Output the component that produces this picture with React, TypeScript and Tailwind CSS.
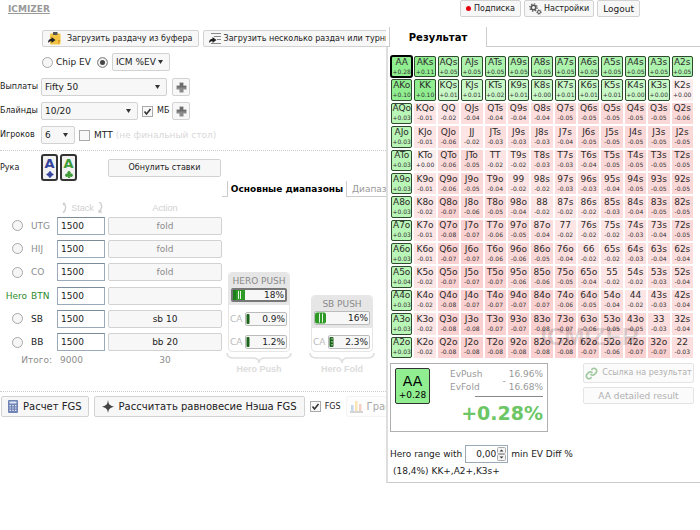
import type { InputHTMLAttributes, ReactNode } from "react";
import { clsx } from "clsx";

const RANKS = ["A", "K", "Q", "J", "T", "9", "8", "7", "6", "5", "4", "3", "2"];

// EV diff in hundredths of a percent, same order as the hand matrix
const EV: number[][] = [
  [28, 11, 5, 5, 5, 5, 5, 5, 5, 5, 5, 5, 5],
  [10, 10, 1, 1, 2, 1, 0, 1, 1, 1, 0, 0, 0],
  [3, -1, -2, -4, -4, -4, -4, -5, -5, -5, -5, -5, -6],
  [3, -1, -6, -2, -3, -3, -3, -4, -5, -5, -5, -5, -5],
  [3, 0, -6, -5, -2, -2, -3, -3, -4, -5, -5, -5, -5],
  [3, -1, -6, -5, -4, -2, -2, -3, -3, -4, -5, -5, -5],
  [3, -2, -7, -6, -5, -4, -2, -2, -2, -3, -4, -5, -5],
  [3, -1, -8, -7, -6, -5, -4, -2, -2, -2, -3, -4, -5],
  [3, -1, -7, -7, -6, -6, -5, -4, -2, -2, -3, -4, -4],
  [4, -2, -7, -7, -7, -6, -6, -5, -4, -2, -2, -3, -4],
  [3, -2, -8, -7, -7, -7, -7, -6, -5, -4, -2, -3, -4],
  [3, -2, -8, -8, -7, -7, -8, -7, -6, -5, -5, -3, -4],
  [3, -2, -8, -8, -8, -8, -8, -8, -7, -6, -7, -7, -3],
];

const SEATS = [
  { name: "UTG", action: "fold", tone: "text-[#8c8c8c]" },
  { name: "HIJ", action: "fold", tone: "text-[#8c8c8c]" },
  { name: "CO", action: "fold", tone: "text-[#8c8c8c]" },
  { name: "BTN", action: "", tone: "text-[#2c8a2c]", hero: true },
  { name: "SB", action: "sb 10", tone: "text-[#222]" },
  { name: "BB", action: "bb 20", tone: "text-[#222]" },
];

function handName(r: number, c: number) {
  if (r === c) return RANKS[r] + RANKS[c];
  return r < c ? `${RANKS[r]}${RANKS[c]}s` : `${RANKS[c]}${RANKS[r]}o`;
}

function inRange(r: number, c: number) {
  return r === 0 || c === 0 || (r === 1 && c < 12);
}

function cellColor(ev: number, selected: boolean) {
  if (selected) {
    if (ev >= 10) return "bg-[#90ee90]";
    if (ev >= 5) return "bg-[#adf2ad]";
    if (ev >= 3) return "bg-[#b9f5b6]";
    return "bg-[#c9f8c7]";
  }
  if (ev >= 0) return "bg-[#fdeeee]";
  if (ev >= -2) return "bg-[#fde5e5]";
  if (ev >= -4) return "bg-[#fcdede]";
  if (ev >= -6) return "bg-[#fbd8d8]";
  return "bg-[#fad0d0]";
}

function formatEv(ev: number) {
  return `${ev < 0 ? "-" : "+"}${(Math.abs(ev) / 100).toFixed(2)}`;
}

function Button({
  children,
  className,
  label,
  disabled,
}: {
  children?: ReactNode;
  className?: string;
  label?: string;
  disabled?: boolean;
}) {
  return (
    <button
      type="button"
      aria-label={label}
      disabled={disabled}
      className={clsx(
        "flex shrink-0 items-center justify-center whitespace-nowrap rounded-[2px] border",
        disabled ? "border-[#e4e4e4] bg-[#fbfbfb]" : "border-[#d2d2d2] bg-[#f7f7f7]",
        className
      )}
    >
      {children}
    </button>
  );
}

function Select({ label, value, className }: { label: string; value: string; className: string }) {
  return (
    <div className={clsx("relative shrink-0", className)}>
      <select
        aria-label={label}
        defaultValue={value}
        className="block h-[18px] w-full appearance-none rounded-[2px] border border-[#d2d2d2] bg-[#f7f7f7] pl-[3px] text-[9px]"
      >
        <option>{value}</option>
      </select>
      <svg className="pointer-events-none absolute right-[7px] top-[7px]" width="5" height="4" viewBox="0 0 5 4">
        <path d="M0 0h5L2.5 4z" fill="#333" />
      </svg>
    </div>
  );
}

function Radio(props: InputHTMLAttributes<HTMLInputElement>) {
  return (
    <input
      type="radio"
      {...props}
      className="block size-[11px] shrink-0 appearance-none rounded-full border border-[#a8a8a8] bg-[#f6f6f6] checked:border-[#999] checked:bg-[#444] checked:shadow-[inset_0_0_0_2px_#f4f4f4]"
    />
  );
}

function Check({ label, checked, className }: { label: string; checked?: boolean; className?: string }) {
  return (
    <label className={clsx("flex shrink-0 items-center gap-1", className)}>
      <span className="relative block size-[11px]">
        <input
          type="checkbox"
          defaultChecked={checked}
          className="peer block size-[11px] appearance-none border border-[#aaa] bg-[#f8f8f8]"
        />
        <svg className="pointer-events-none absolute inset-0 hidden peer-checked:block" width="11" height="11" viewBox="0 0 11 11">
          <path d="M2.5 5.5l2 2.5 4-5" fill="none" stroke="#333" strokeWidth="1.6" />
        </svg>
      </span>
      {label}
    </label>
  );
}

function PlusIcon() {
  return (
    <svg width="11" height="11" viewBox="0 0 11 11">
      <path d="M3.5.5h4v3h3v4h-3v3h-4v-3h-3v-4h3z" fill="#8a8a8a" />
      <path d="M4 1h3v3h3v1.5H1V4h3z" fill="#6c6c6c" />
    </svg>
  );
}

function ArrowMark() {
  return <path d="M0 11c0-3 1.500-4.200 3.500-4.200V5l4 3-4 3V9.200C2 9.200 1 9.700 0 11z" fill="#222" />;
}

function ClipboardIcon() {
  return (
    <svg width="13" height="13" viewBox="0 0 13 13">
      <rect x="2" y="1.500" width="10.500" height="11" rx="1" fill="#f3c444" />
      <path d="M5 0h4.500v3H5z" fill="#555" />
      <path d="M10 8h2.500l-2.500 4.500z" fill="#d99b1f" />
      <ArrowMark />
    </svg>
  );
}

function LinesIcon() {
  return (
    <svg width="13" height="13" viewBox="0 0 13 13">
      <path d="M2 1.500h10M5 4.500h7M8 7.500h4M2 11.500h10" stroke="#888" strokeWidth="1.200" />
      <ArrowMark />
    </svg>
  );
}

function GearsIcon() {
  return (
    <svg width="13" height="12" viewBox="0 0 13 12" fill="none" stroke="#555">
      <circle cx="4.500" cy="4.500" r="2.300" strokeWidth="1.600" />
      <circle cx="4.500" cy="4.500" r="3.700" strokeWidth="1.200" strokeDasharray="1.400 1.500" />
      <circle cx="10" cy="9" r="1.500" strokeWidth="1" />
      <circle cx="10" cy="9" r="2.400" strokeWidth=".8" strokeDasharray=".9 1" />
    </svg>
  );
}

function CalculatorIcon() {
  return (
    <svg width="10" height="13" viewBox="0 0 10 13">
      <rect width="10" height="13" rx="1" fill="#6f83b5" />
      <path d="M1.500 1.500h7v2h-7z" fill="#dfe5f4" />
      <path d="M1.500 5.700h7M1.500 8h7M1.500 10.300h7" stroke="#dfe5f4" strokeWidth="1.200" strokeDasharray="1.500 1.200" />
    </svg>
  );
}

function StarIcon() {
  return (
    <svg width="12" height="13" viewBox="0 0 12 13">
      <path d="M6 0l1 5 5 1.800-5 1.400-1 4.800-1-4.800L0 6.800 5 5z" fill="#444" />
      <path d="M6 3l2 2 2 1.800-2 1.700-2 2-2-2-2-1.700L4 5z" fill="#444" />
    </svg>
  );
}

function ChartIcon() {
  return (
    <svg width="13" height="13" viewBox="0 0 13 13">
      <path d="M1 5h2.500v6H1z" fill="#6c9bd8" />
      <path d="M5 1h2.500v10H5z" fill="#f0c040" />
      <path d="M9 4h2.500v7H9z" fill="#e58a6a" />
      <path d="M0 12h13" stroke="#777" strokeWidth="1.500" />
    </svg>
  );
}

function LinkIcon() {
  return (
    <svg className="opacity-50" width="13" height="13" viewBox="0 0 24 24" fill="none" stroke="#4a9a4a" strokeWidth="3">
      <path d="M10 13a5 5 0 0 0 7.500.5l3-3a5 5 0 0 0-7-7l-1.700 1.700" />
      <path d="M14 11a5 5 0 0 0-7.500-.5l-3 3a5 5 0 0 0 7 7l1.700-1.700" />
    </svg>
  );
}

function Card({ suit }: { suit: "diamond" | "club" }) {
  const diamond = suit === "diamond";
  return (
    <div
      className={clsx(
        "flex h-[27px] w-[17px] flex-col items-center rounded-[3px] border-2 border-[#333] bg-[#f1f1f1]",
        diamond ? "text-[#34449c]" : "text-[#3f9b37]"
      )}
    >
      <span className="text-[13px] font-bold leading-[15px]">A</span>
      <svg width="8" height="7" viewBox="0 0 8 7" fill="currentColor">
        {diamond ? (
          <path d="M4 0c.8 1.500 2 2.700 3.600 3.500C6 4.300 4.800 5.500 4 7 3.200 5.500 2 4.300.4 3.500 2 2.700 3.200 1.500 4 0z" stroke="currentColor" strokeWidth=".5" />
        ) : (
          <path d="M4 0a1.700 1.700 0 0 1 1.400 2.700A1.700 1.700 0 1 1 4.700 5L5.200 7H2.800l.5-2A1.700 1.700 0 1 1 2.600 2.700 1.700 1.700 0 0 1 4 0z" />
        )}
      </svg>
    </div>
  );
}

function RangeBar({ value, kind, active }: { value: string; kind: "wide" | "mid" | "thin" | "dots"; active?: boolean }) {
  return (
    <button
      type="button"
      className={clsx(
        "flex h-[14px] min-w-0 flex-1 items-center justify-between rounded-[2px] bg-[#f7f7f7] pr-px text-[#222]",
        active ? "border-2 border-[#777]" : "border border-[#bbb]"
      )}
    >
      {kind === "wide" && (
        <svg width="12" height="10" viewBox="0 0 12 10">
          <path d="M0 0h12v10H0z" fill="#2d9a26" />
          <path d="M5 1h1v8H5zM7 1h1v8H7z" fill="#e8f5e6" />
          <path d="M0 0h3v10H0z" fill="#1d7d1a" />
        </svg>
      )}
      {kind === "mid" && (
        <svg width="11" height="12" viewBox="0 0 11 12">
          <rect y=".5" width="11" height="11" rx="2" fill="#2d9a26" />
          <path d="M4 1.500h1v9H4zM7 1.500h1v9H7z" fill="#e8f5e6" />
        </svg>
      )}
      {kind === "thin" && (
        <svg width="4" height="12" viewBox="0 0 4 12">
          <rect x=".5" y="1" width="3" height="10" rx="1" fill="#1b641a" />
        </svg>
      )}
      {kind === "dots" && (
        <svg width="5" height="12" viewBox="0 0 5 12">
          <rect x=".5" y="1" width="4" height="10" rx="1" fill="#1b641a" />
          <path d="M3 2v8" stroke="#d9efd7" strokeDasharray="1.500 1.500" />
        </svg>
      )}
      <span>{value}</span>
    </button>
  );
}

function CallRow({ value, kind }: { value: string; kind: "thin" | "dots" }) {
  return (
    <div className="flex items-center gap-[3px] text-[#bbb]">
      CA
      <RangeBar value={value} kind={kind} />
    </div>
  );
}

function RangeGroup({
  title,
  caption,
  push,
  children,
}: {
  title: string;
  caption: string;
  push: ReactNode;
  children: ReactNode;
}) {
  return (
    <div className="flex w-[66px] flex-col items-center">
      <div className="w-[62px] overflow-hidden rounded-[4px] border border-[#e6e6e6]">
        <div className="bg-[#e6e6e6] px-[2px] pb-[3px] pt-[2px]">
          <div className="text-center leading-[13px] text-[#8a8a8a]">{title}</div>
          <div className="flex">{push}</div>
        </div>
        <div className="flex flex-col gap-[9px] pb-[2px] pl-px pr-[2px] pt-[7px]">{children}</div>
      </div>
      <svg width="66" height="12" viewBox="0 0 66 12" fill="none" stroke="#dedede" strokeWidth="1.500">
        <path d="M1 1c0 4 3 5 7 5h19c4 0 6 2 6 5 0-3 2-5 6-5h19c4 0 7-1 7-5" />
      </svg>
      <div className="font-[Liberation_Sans] font-bold leading-[10px] text-[#dcdcdc]">{caption}</div>
    </div>
  );
}

function SeatTable() {
  return (
    <table className="h-[165px] w-[222px] table-fixed border-collapse">
      <colgroup>
        <col className="w-[31px]" />
        <col className="w-[26px]" />
        <col className="w-[51px]" />
        <col />
      </colgroup>
      <thead>
        <tr className="h-[13px] font-[Liberation_Sans] text-[9px] text-[#d0d0d0]">
          <th />
          <th />
          <th className="p-0 font-normal">
            <span className="flex items-center justify-center gap-1">
              <svg width="5" height="11" viewBox="0 0 5 11" fill="none" stroke="currentColor" strokeWidth="1.400">
                <path d="M1 3l2-2M1 1c4 2 3 7 0 10" />
              </svg>
              Stack
              <svg width="5" height="11" viewBox="0 0 5 11" fill="none" stroke="currentColor" strokeWidth="1.400">
                <path d="M1 0c4 2 3 7 0 10M1 8v2h3" />
              </svg>
            </span>
          </th>
          <th className="p-0 font-normal">Action</th>
        </tr>
      </thead>
      <tbody>
        {SEATS.map((seat) => (
          <tr key={seat.name} className={seat.tone}>
            <td className="p-0">
              {seat.hero ? (
                <span className="block pr-1 text-right">Hero</span>
              ) : (
                <span className="flex pl-3">
                  <Radio name="hero" aria-label={`Hero ${seat.name}`} />
                </span>
              )}
            </td>
            <td className="p-0">{seat.name}</td>
            <td className="p-0">
              <input
                aria-label={`${seat.name} stack`}
                defaultValue="1500"
                className="block h-[18px] w-[48px] border border-[#9aaab8] border-t-[#7d8c99] bg-white pl-[3px] text-[9px] text-[#222]"
              />
            </td>
            <td className="p-0">
              <Button label={`${seat.name} action`} className="h-[18px] w-full">
                {seat.action}
              </Button>
            </td>
          </tr>
        ))}
      </tbody>
      <tfoot>
        <tr className="h-[12px] text-[#8c8c8c]">
          <td colSpan={2} className="p-0 pr-[5px] text-right">Итого:</td>
          <td className="p-0 pl-[3px]">9000</td>
          <td className="p-0 text-center">30</td>
        </tr>
      </tfoot>
    </table>
  );
}

function HandMatrix() {
  return (
    <div className="relative">
      <table className="h-[306px] w-full table-fixed border-separate border-spacing-[2px]">
        <tbody>
          {EV.map((row, r) => (
            <tr key={RANKS[r]}>
              {row.map((ev, c) => {
                const selected = inRange(r, c);
                return (
                  <td
                    key={c}
                    className={clsx(
                      "overflow-hidden p-0 text-center",
                      cellColor(ev, selected),
                      selected && "rounded-[2px] outline-offset-[-1px]",
                      selected && (r + c === 0 ? "outline-2 outline-black" : "outline outline-[#2f4a2f]")
                    )}
                  >
                    <div className="text-[9px] leading-[10px] text-[#2b2b2b]">{handName(r, c)}</div>
                    <div className="text-[6px] leading-[10px] text-[#333]">{formatEv(ev)}</div>
                  </td>
                );
              })}
            </tr>
          ))}
        </tbody>
      </table>
      <div className="pointer-events-none absolute bottom-2 right-[56px] font-[Liberation_Sans] text-[24px] font-bold leading-[30px] text-black/15">
        ICMIZER
      </div>
    </div>
  );
}

function ResultPanel() {
  return (
    <aside className="w-[314px] shrink-0">
      <div className="flex h-[20px]">
        <div className="w-[4px] border-b border-r border-[#ccc]" />
        <h2 className="flex w-[96px] items-center justify-center pt-px text-[10px] font-bold text-black">Результат</h2>
        <div className="flex-1 border-b border-l border-[#ccc]" />
      </div>
      <div className="border-b border-l-2 border-[#ccc] border-l-[#dedede] pb-1">
        <div className="pl-px pr-[5px] pt-[7px]">
          <HandMatrix />
        </div>
        <div className="flex items-start justify-between pl-[2px] pr-[6px] pt-[3px]">
          <div className="flex h-[69px] w-[158px] gap-1 border border-[#b0b0b0] p-1">
            <div className="flex h-[36px] w-[35px] flex-col items-center rounded-[2px] border border-[#333] bg-[#90ee90] pt-[5px] text-black">
              <span className="text-[14px] leading-[15px]">AA</span>
              <span className="leading-[12px]">+0.28</span>
            </div>
            <div className="flex flex-1 flex-col">
              <div className="flex items-center pl-4 leading-[13px] text-[#999]">
                <div>
                  <div>EvPush</div>
                  <div>EvFold</div>
                </div>
                <div className="flex-1 pr-[3px] text-right">-</div>
                <div className="text-right">
                  <div>16.96%</div>
                  <div>16.68%</div>
                </div>
              </div>
              <div className="ml-auto mt-[2px] w-[68px] border-t border-[#888]" />
              <div className="pt-1 text-right text-[19px] font-bold leading-[24px] text-[#6cc665]">+0.28%</div>
            </div>
          </div>
          <div className="flex w-[111px] flex-col gap-1 text-[#b0b0b0]">
            <Button disabled className="h-[20px] gap-1 text-[8px]">
              <LinkIcon />
              Ссылка на результат
            </Button>
            <Button disabled className="h-[17px]">AA detailed result</Button>
          </div>
        </div>
        <div className="flex items-center gap-[3px] pl-[2px] pt-[13px]">
          <label htmlFor="min-ev">Hero range with</label>
          <div className="relative">
            <input
              id="min-ev"
              defaultValue="0,00"
              className="block h-[18px] w-[43px] border border-[#9aaab8] pr-[11px] text-right text-[9px]"
            />
            <svg className="pointer-events-none absolute right-[2px] top-[2px]" width="9" height="14" viewBox="0 0 9 14">
              <rect x=".5" y=".5" width="8" height="6" rx="1" fill="#f4f4f4" stroke="#aaa" />
              <rect x=".5" y="7.500" width="8" height="6" rx="1" fill="#f4f4f4" stroke="#aaa" />
              <path d="M2.500 4.500h4l-2-2zM2.500 9.500h4l-2 2z" fill="#333" />
            </svg>
          </div>
          <span>min EV Diff %</span>
        </div>
        <div className="pl-[5px] pt-[2px] leading-[13px]">(18,4%) KK+,A2+,K3s+</div>
      </div>
    </aside>
  );
}

export default function App() {
  return (
    <div className="min-h-screen overflow-hidden bg-white font-[DejaVu_Sans,Verdana,sans-serif] text-[9px] leading-[12px] text-[#222]">
      <header className="flex h-[27px] items-start justify-between pl-2 pr-[60px]">
        <a href="#" className="pt-[3px] font-bold text-[#999] underline">ICMIZER</a>
        <nav className="flex gap-[3px] text-[8px]">
          <Button className="h-[17px] gap-[3px] px-[5px]">
            <span className="size-[5px] rounded-full bg-red-600" />
            Подписка
          </Button>
          <Button className="h-[17px] gap-[2px] px-1">
            <GearsIcon />
            Настройки
          </Button>
          <Button className="h-[17px] px-[5px] text-[9px]">Logout</Button>
        </nav>
      </header>

      <div className="flex items-start">
        <main className="min-w-0 flex-1 overflow-hidden pt-[3px]">
          <div className="flex gap-1 pl-[42px] text-[8px]">
            <Button className="h-[17px] gap-[6px] px-[5px]">
              <ClipboardIcon />
              Загрузить раздачу из буфера
            </Button>
            <Button className="h-[17px] gap-[2px] px-[5px]">
              <LinesIcon />
              Загрузить несколько раздач или турнир
            </Button>
          </div>

          <div className="mt-[6px] flex h-[18px] items-center gap-[6px] pl-[42px]">
            <label className="flex items-center gap-[3px]">
              <Radio name="model" />
              Chip EV
            </label>
            <div className="flex items-center gap-1">
              <Radio name="model" defaultChecked aria-label="ICM" />
              <Select label="Модель" value="ICM %EV" className="w-[58px]" />
            </div>
          </div>

          <div className="mt-[7px] flex flex-col gap-[6px]">
            <div className="flex items-center">
              <span className="w-[41px] text-[8px]">Выплаты</span>
              <Select label="Выплаты" value="Fifty 50" className="w-[126px]" />
              <Button label="Добавить выплаты" className="ml-[5px] size-[18px]"><PlusIcon /></Button>
            </div>
            <div className="flex items-center">
              <span className="w-[41px] text-[8px]">Блайнды</span>
              <Select label="Блайнды" value="10/20" className="w-[97px]" />
              <Check label="МБ" checked className="ml-1 w-[30px] text-[8px]" />
              <Button label="Добавить блайнды" className="size-[18px]"><PlusIcon /></Button>
            </div>
            <div className="flex items-center">
              <span className="w-[41px] text-[8px]">Игроков</span>
              <Select label="Игроков" value="6" className="w-[34px]" />
              <Check label="МТТ" className="ml-1" />
              <span className="ml-[3px] text-[#d8d8d8]">(не финальный стол)</span>
            </div>
          </div>

          <div className="mt-[6px] border-t border-dotted border-[#ccc]" />

          <div className="flex items-center pt-[3px] text-[8px]">
            <span className="w-[41px]">Рука</span>
            <div className="flex gap-[2px]">
              <Card suit="diamond" />
              <Card suit="club" />
            </div>
            <Button className="ml-[31px] h-[18px] w-[113px]">Обнулить ставки</Button>
          </div>

          <div className="flex min-h-[193px]">
            <div className="shrink-0 pt-[20px]">
              <SeatTable />
            </div>
            <div className="flex min-w-0 flex-1 flex-col justify-between">
              <div className="flex h-[16px] whitespace-nowrap">
                <div className="w-[6px] shrink-0 border-b border-r border-[#ccc]" />
                <div className="flex w-[118px] shrink-0 items-center justify-center font-bold text-black">Основные диапазоны</div>
                <div className="flex flex-1 items-center border-b border-l border-[#ccc] pl-[5px] text-[#999]">Диапазоны</div>
              </div>
              <div className="flex items-end gap-[17px] pl-1">
                <RangeGroup title="HERO PUSH" caption="Hero Push" push={<RangeBar value="18%" kind="wide" active />}>
                  <CallRow value="0.9%" kind="thin" />
                  <CallRow value="1.2%" kind="thin" />
                </RangeGroup>
                <RangeGroup title="SB PUSH" caption="Hero Fold" push={<RangeBar value="16%" kind="mid" />}>
                  <CallRow value="2.3%" kind="dots" />
                </RangeGroup>
              </div>
            </div>
          </div>

          <div className="mt-[17px] border-t border-dotted border-[#ccc]" />

          <div className="flex items-center gap-[5px] pl-px pt-1 text-[10px]">
            <Button className="h-[21px] gap-[5px] px-[6px]">
              <CalculatorIcon />
              Расчет FGS
            </Button>
            <Button className="h-[21px] gap-[5px] px-[7px]">
              <StarIcon />
              Рассчитать равновесие Нэша FGS
            </Button>
            <Check label="FGS" checked className="text-[8px]" />
            <Button disabled className="h-[21px] gap-1 px-[3px] opacity-40">
              <ChartIcon />
              Графики
            </Button>
          </div>
        </main>
        <ResultPanel />
      </div>
    </div>
  );
}
